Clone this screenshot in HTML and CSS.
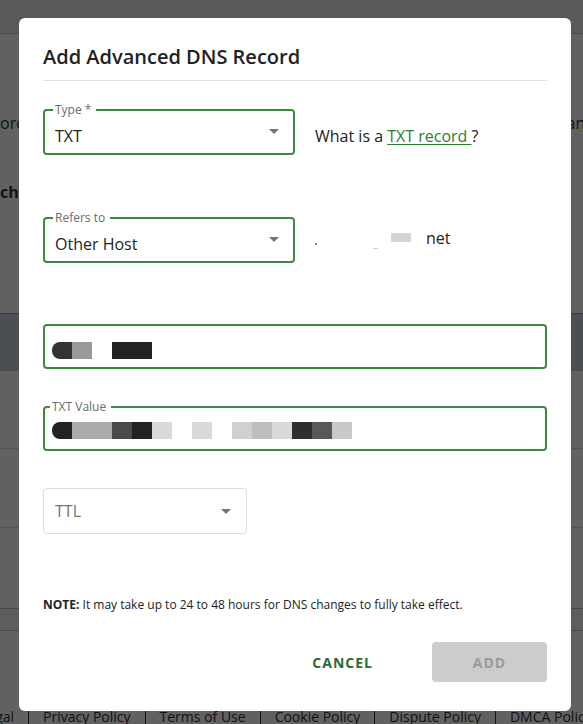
FILE: index.html
```html
<!DOCTYPE html>
<html lang="en">
<head>
<meta charset="utf-8">
<title>Add Advanced DNS Record</title>
<link rel="stylesheet" href="styles.css">
</head>
<body>
<div class="page">
  <header class="topbar"></header>
  <section class="intro">
    <div class="intro-line"><span class="intro-left">ord</span><span class="intro-right">and</span></div>
    <div class="intro-bold">change</div>
  </section>
  <div class="band"></div>
  <div class="pg-row pg-row-1"></div>
  <div class="pg-row pg-row-2"></div>
  <div class="pg-row pg-row-3"></div>
  <div class="pg-row pg-row-4"></div>
  <footer class="footer">
    <nav class="footer-nav">
      <a class="f-link f-first">Legal</a>
      <a class="f-link">Privacy Policy</a>
      <a class="f-link">Terms of Use</a>
      <a class="f-link">Cookie Policy</a>
      <a class="f-link">Dispute Policy</a>
      <a class="f-link">DMCA Policy</a>
    </nav>
  </footer>
</div>
<div class="overlay"></div>
<div class="modal" role="dialog" aria-labelledby="dlg-title">
  <h2 class="title" id="dlg-title">Add Advanced DNS Record</h2>

  <div class="row row-type">
    <fieldset class="field select">
      <legend>Type *</legend>
      <div class="field-body">
        <span class="value">TXT</span>
        <svg class="caret" width="10" height="5" viewBox="0 0 10 5"><path d="M0 0h10L5 5z" fill="#757575"/></svg>
      </div>
    </fieldset>
    <p class="side-text">What is a <a class="link">TXT record </a>?</p>
  </div>

  <div class="row row-refers">
    <fieldset class="field select">
      <legend>Refers to</legend>
      <div class="field-body">
        <span class="value">Other Host</span>
        <svg class="caret" width="10" height="5" viewBox="0 0 10 5"><path d="M0 0h10L5 5z" fill="#757575"/></svg>
      </div>
    </fieldset>
    <div class="host-text">
      <span class="r-dot"></span>
      <span class="r-dash"></span>
      <span class="r-block"></span>
      <span class="r-net">net</span>
    </div>
  </div>

  <div class="host-field">
    <div class="redact">
      <span class="rb rb-first" style="background:#333333"></span>
      <span class="rb" style="background:#999999"></span>
      <span class="rb" style="background:transparent"></span>
      <span class="rb" style="background:#222222"></span>
      <span class="rb" style="background:#222222"></span>
    </div>
  </div>

  <fieldset class="field txt-field">
    <legend>TXT Value</legend>
    <div class="redact txt-redact">
      <span class="rb rb-first" style="background:#222222"></span>
      <span class="rb" style="background:#aaaaaa"></span>
      <span class="rb" style="background:#aaaaaa"></span>
      <span class="rb" style="background:#4a4a4a"></span>
      <span class="rb" style="background:#222222"></span>
      <span class="rb" style="background:#d9d9d9"></span>
      <span class="rb" style="background:transparent"></span>
      <span class="rb" style="background:#d9d9d9"></span>
      <span class="rb" style="background:transparent"></span>
      <span class="rb" style="background:#d0d0d0"></span>
      <span class="rb" style="background:#bebebe"></span>
      <span class="rb" style="background:#d9d9d9"></span>
      <span class="rb" style="background:#2e2e2e"></span>
      <span class="rb" style="background:#595959"></span>
      <span class="rb" style="background:#c9c9c9"></span>
    </div>
  </fieldset>

  <div class="ttl">
    <span class="ttl-text">TTL</span>
    <svg class="caret-ttl" width="10" height="5" viewBox="0 0 10 5"><path d="M0 0h10L5 5z" fill="#757575"/></svg>
  </div>

  <p class="note"><strong>NOTE:</strong> It may take up to 24 to 48 hours for DNS changes to fully take effect.</p>

  <div class="actions">
    <button class="btn btn-cancel" type="button">CANCEL</button>
    <button class="btn btn-add" type="button" disabled>ADD</button>
  </div>
</div>
</body>
</html>
```

FILE: styles.css
```css
* { box-sizing: border-box; }

html, body {
  margin: 0;
  padding: 0;
  height: 100%;
}

body {
  font-family: "Open Sans", "Noto Sans", "Liberation Sans", sans-serif;
  color: #222;
  background: #ffffff;
  overflow: hidden;
}

/* ---------- background page ---------- */
.page {
  width: 583px;
  height: 724px;
  overflow: hidden;
}

.topbar {
  height: 34px;
  background: #ececec;
  border-bottom: 1px solid #c4c4c4;
}

.intro {
  height: 279px;
  padding-top: 79px;
  font-size: 16px;
  line-height: 20px;
  color: #333;
}

.intro-line {
  display: flex;
  justify-content: space-between;
  margin-right: -12px;
}

.intro-bold {
  margin-top: 49px;
  font-weight: 700;
}

.band {
  height: 58px;
  background: #c6d0db;
  border-top: 1px solid #9aa0a6;
}

.pg-row {
  border-bottom: 1px solid #d8d8d8;
}
.pg-row-1 { height: 78px; }
.pg-row-2 { height: 79px; }
.pg-row-3 { height: 81px; border-bottom-color: #bdbdbd; }
.pg-row-4 { height: 22px; background: #f3f3f3; border-bottom-color: #bdbdbd; }

.footer {
  padding-top: 77px;
}

.footer-nav {
  display: flex;
  margin-left: -20px;
  font-size: 14px;
  line-height: 18px;
  color: #333;
  white-space: nowrap;
}

.f-link {
  padding: 0 14px;
  border-left: 1px solid #333;
}

.f-first {
  padding-left: 0;
  border-left: none;
}

/* ---------- overlay & modal ---------- */
.overlay {
  position: fixed;
  inset: 0;
  background: rgba(0, 0, 0, 0.62);
}

.modal {
  position: fixed;
  left: 19px;
  top: 18px;
  width: 552px;
  height: 693px;
  background: #ffffff;
  border-radius: 6px;
  padding: 27px 24px 29px;
  display: flex;
  flex-direction: column;
}

.title {
  margin: 0;
  font-size: 20px;
  line-height: 24px;
  font-weight: 600;
  color: #222;
  padding-bottom: 11px;
  border-bottom: 1px solid #e2e2e2;
}

.row {
  display: flex;
  align-items: flex-start;
  gap: 20px;
}

.row-type { margin-top: 22px; }
.row-refers { margin-top: 56px; }

.field {
  margin: 0;
  min-width: 0;
  border: 2px solid #3d8a3f;
  border-radius: 4px;
}

.field legend {
  font-size: 12px;
  line-height: 14px;
  color: #6b6b6b;
  padding: 0 5px 0 2px;
  margin-left: -2px;
}

.select {
  width: 252px;
  flex: none;
  padding: 0 14px 7px 10px;
}

.field-body {
  display: flex;
  align-items: flex-start;
  padding-top: 9px;
}

.value {
  flex: 1;
  font-size: 16px;
  line-height: 20px;
  color: #222;
}

.caret {
  margin-top: 3px;
  flex: none;
}

.side-text {
  margin: 23px 0 0;
  font-size: 16px;
  line-height: 20px;
  color: #222;
}

.link {
  color: #2e7d32;
  text-decoration: underline;
  text-underline-offset: 2px;
}

.host-text {
  display: flex;
  align-items: flex-start;
  margin-top: 17px;
  height: 20px;
  font-size: 16px;
  line-height: 20px;
  color: #222;
}

.r-dot {
  width: 2px;
  height: 2px;
  background: #888;
  margin-top: 15px;
}

.r-dash {
  width: 5px;
  height: 1px;
  background: #d0d0d0;
  margin-top: 20px;
  margin-left: 56px;
}

.r-block {
  width: 20px;
  height: 9px;
  background: #d4d4d4;
  margin-top: 5px;
  margin-left: 13px;
}

.r-net {
  margin-left: 15px;
}

.host-field {
  margin-top: 61px;
  height: 45px;
  border: 2px solid #3d8a3f;
  border-radius: 4px;
  padding: 16px 7px 0;
}

.redact {
  display: flex;
  height: 17px;
}

.rb {
  width: 20px;
  height: 17px;
  flex: none;
}

.rb-first {
  border-radius: 8px 0 0 8px;
}

.txt-field {
  margin-top: 31px;
  padding: 0 7px 10px;
}

.txt-redact {
  margin-top: 8px;
}

.ttl {
  margin-top: 37px;
  width: 204px;
  height: 46px;
  border: 1px solid #dcdcdc;
  border-radius: 4px;
  display: flex;
  align-items: center;
  padding: 0 15px 0 11px;
}

.ttl-text {
  flex: 1;
  font-size: 16px;
  line-height: 20px;
  color: #757575;
}

.caret-ttl { flex: none; }

.note {
  margin: 63px 0 0;
  font-size: 12px;
  line-height: 16px;
  color: #222;
}

.note strong { font-weight: 700; }

.actions {
  margin-top: auto;
  display: flex;
  justify-content: flex-end;
  align-items: center;
}

.btn {
  font-family: inherit;
  font-size: 14px;
  font-weight: 700;
  letter-spacing: 1px;
  height: 40px;
  border: none;
  border-radius: 4px;
  background: transparent;
  cursor: pointer;
}

.btn-cancel {
  color: #2b6b2e;
  padding: 0 16px;
  margin-right: 43px;
}

.btn-add {
  width: 115px;
  background: #cccccc;
  color: #9a9a9a;
}
```
